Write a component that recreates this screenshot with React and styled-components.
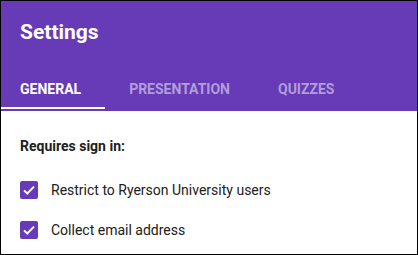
import React from 'react'
import styled, { createGlobalStyle } from 'styled-components'

const Global = createGlobalStyle`
  html, body { margin: 0; padding: 0; background: #fff; }
  body { font-family: Roboto, "Liberation Sans", sans-serif; }
`

let color = {
  purple: "#673ab7",
  tabInactive: "#b39ddb",
  text: "#202020"
}

const Card = styled.div`
  width: 418px;
  height: 255px;
  box-sizing: border-box;
  border: 1px solid #000;
  overflow: hidden;
  background: #fff;
`

const Header = styled.div`
  background: ${color.purple};
  padding-top: 17px;
`

const Title = styled.h1`
  margin: 0 0 0 19px;
  font-size: 21px;
  line-height: 28px;
  font-weight: 700;
  color: #fff;
`

const TabBar = styled.div`
  display: flex;
  margin-top: 28px;
  margin-left: -5px;
`

const Tab = styled.div`
  position: relative;
  padding: 0 24px;
  height: 37px;
  line-height: 30px;
  font-size: 14px;
  font-weight: 700;
  text-transform: uppercase;
  color: ${p => (p.$active ? '#fff' : color.tabInactive)};
  &::after {
    content: '';
    position: absolute;
    left: 0;
    right: 0;
    bottom: 2px;
    height: 2px;
    background: ${p => (p.$active ? '#fff' : 'transparent')};
  }
`

const Body = styled.div`
  padding: 25px 19px 0;
`

const Heading = styled.div`
  font-size: 14px;
  font-weight: 700;
  color: ${color.text};
  line-height: 20px;
  margin-bottom: 14px;
`

const Option = styled.label`
  display: flex;
  align-items: center;
  gap: 13px;
  height: 40px;
  font-size: 14px;
  color: ${color.text};
`

const Box = styled.span`
  width: 18px;
  height: 18px;
  border-radius: 2px;
  background: ${color.purple};
  display: flex;
  align-items: center;
  justify-content: center;
`

const Check = () => (
  <svg width="16" height="16" viewBox="0 0 24 24">
    <path d="M4.5 12.5l4.8 4.8L19.5 7" fill="none" stroke="#fff" strokeWidth="3" />
  </svg>
)

export default function App() {
  return (
    <Card>
      <Global />
      <Header>
        <Title>Settings</Title>
        <TabBar>
          <Tab $active>General</Tab>
          <Tab>Presentation</Tab>
          <Tab>Quizzes</Tab>
        </TabBar>
      </Header>
      <Body>
        <Heading>Requires sign in:</Heading>
        <Option><Box><Check /></Box>Restrict to Ryerson University users</Option>
        <Option><Box><Check /></Box>Collect email address</Option>
      </Body>
    </Card>
  )
}
